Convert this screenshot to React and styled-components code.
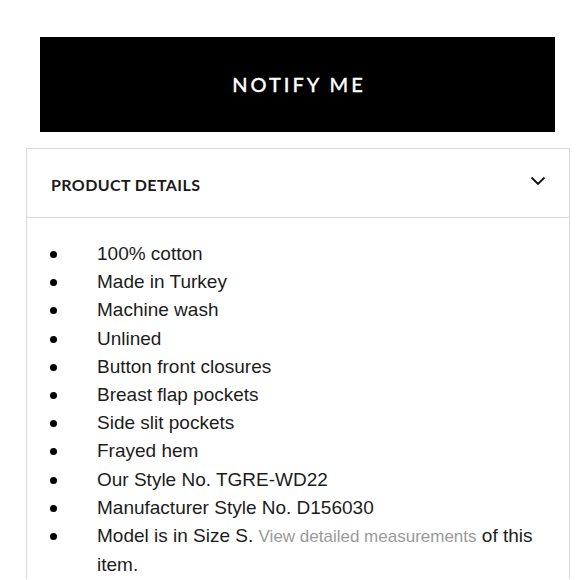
import React from 'react';
import styled, { createGlobalStyle } from 'styled-components';

const GlobalStyle = createGlobalStyle`
  body {
    margin: 0;
    background: #fff;
    font-family: 'Liberation Sans', Arial, sans-serif;
  }
`;

const items = [
  '100% cotton',
  'Made in Turkey',
  'Machine wash',
  'Unlined',
  'Button front closures',
  'Breast flap pockets',
  'Side slit pockets',
  'Frayed hem',
  'Our Style No. TGRE-WD22',
  'Manufacturer Style No. D156030',
];

const App = () => {
  return (
    <Page>
      <GlobalStyle />
      <NotifyButton>NOTIFY ME</NotifyButton>
      <Panel>
        <PanelHeader>
          <span>PRODUCT DETAILS</span>
          <svg width="16" height="10" viewBox="0 0 16 10" fill="none">
            <path d="M1.5 1.5L8 8l6.5-6.5" stroke="#111" strokeWidth="1.8" />
          </svg>
        </PanelHeader>
        <DetailList>
          {items.map((text) => (
            <DetailItem key={text}>
              <Dot />
              <span>{text}</span>
            </DetailItem>
          ))}
          <DetailItem>
            <Dot />
            <span>
              Model is in Size S. <MeasureLink>View detailed measurements</MeasureLink> of this item.
            </span>
          </DetailItem>
        </DetailList>
      </Panel>
    </Page>
  );
};

export default App;

const Page = styled.div`
  display: flex;
  flex-direction: column;
  padding: 37px 10px 0 26px;
  height: 580px;
  box-sizing: border-box;
  overflow: hidden;
`;

const NotifyButton = styled.button`
  margin-left: 14px;
  width: 515px;
  height: 95px;
  padding: 0 0 2px 3px;
  background: #000;
  color: #fff;
  border: none;
  font-family: 'Lato', sans-serif;
  font-size: 20px;
  font-weight: 500;
  letter-spacing: 3px;
  -webkit-text-stroke: 0.3px #fff;
  cursor: pointer;
`;

const Panel = styled.div`
  margin-top: 16px;
  width: 544px;
  border: 1px solid #d9d9d9;
  border-bottom: none;
  box-sizing: border-box;
`;

const PanelHeader = styled.div`
  display: flex;
  align-items: center;
  justify-content: space-between;
  height: 68px;
  padding: 0 23px 0 24px;
  border-bottom: 1px solid #d9d9d9;
  font-family: 'Lato', sans-serif;
  font-weight: 700;
  font-size: 16px;
  color: #1a1a1a;
  letter-spacing: 0.4px;

  span {
    margin-top: 2px;
  }
  svg {
    margin-top: -5px;
  }
`;

const DetailList = styled.ul`
  list-style: none;
  margin: 0;
  padding: 22px 18px 0 23px;
`;

const DetailItem = styled.li`
  display: flex;
  align-items: flex-start;
  font-size: 19px;
  line-height: 28.2px;
  color: #1c1c1c;
`;

const Dot = styled.i`
  flex: none;
  width: 7px;
  height: 7px;
  border-radius: 50%;
  background: #000;
  margin: 11px 40px 0 0;
`;

const MeasureLink = styled.a`
  color: #9a9a9a;
  font-size: 17px;
  cursor: pointer;
`;
